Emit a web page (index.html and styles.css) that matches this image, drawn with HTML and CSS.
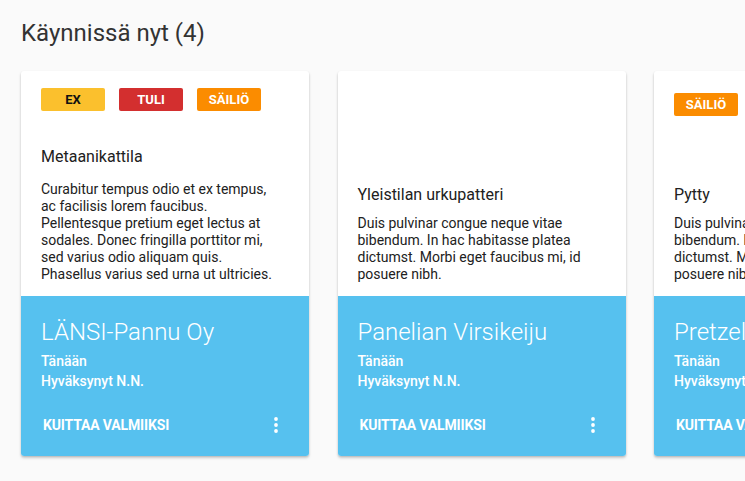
FILE: index.html
```html
<!DOCTYPE HTML>
<html>

<head>
    <meta charset="utf-8">
    <link rel="stylesheet" href="styles.css">
</head>

<body>
    <div class="page">
        <h1 class="page-title">Käynnissä nyt (4)</h1>

        <div class="cards">
            <div class="card">
                <div class="card-body card-body--tight">
                    <div class="tags">
                        <span class="tag tag-ex">EX</span>
                        <span class="tag tag-fire">TULI</span>
                        <span class="tag tag-tank">SÄILIÖ</span>
                    </div>
                    <h2 class="card-title card-title--spaced">Metaanikattila</h2>
                    <p class="card-text">Curabitur tempus odio et ex tempus, ac facilisis lorem faucibus.
                        Pellentesque pretium eget lectus at sodales. Donec fringilla porttitor mi,
                        sed varius odio aliquam quis. Phasellus varius sed urna ut ultricies.</p>
                </div>
                <div class="card-footer">
                    <div class="company">LÄNSI-Pannu Oy</div>
                    <div class="meta">Tänään<br>Hyväksynyt N.N.</div>
                    <div class="actions">
                        <button class="action-btn">Kuittaa valmiiksi</button>
                        <button class="more-btn" aria-label="Lisää">
                            <svg width="24" height="24" viewBox="0 0 24 24">
                                <circle cx="12" cy="6" r="1.9" fill="#fff" />
                                <circle cx="12" cy="12" r="1.9" fill="#fff" />
                                <circle cx="12" cy="18" r="1.9" fill="#fff" />
                            </svg>
                        </button>
                    </div>
                </div>
            </div>

            <div class="card">
                <div class="card-body">
                    <h2 class="card-title">Yleistilan urkupatteri</h2>
                    <p class="card-text">Duis pulvinar congue neque vitae bibendum. In hac habitasse platea
                        dictumst. Morbi eget faucibus mi, id posuere nibh.</p>
                </div>
                <div class="card-footer">
                    <div class="company">Panelian Virsikeiju</div>
                    <div class="meta">Tänään<br>Hyväksynyt N.N.</div>
                    <div class="actions">
                        <button class="action-btn">Kuittaa valmiiksi</button>
                        <button class="more-btn" aria-label="Lisää">
                            <svg width="24" height="24" viewBox="0 0 24 24">
                                <circle cx="12" cy="6" r="1.9" fill="#fff" />
                                <circle cx="12" cy="12" r="1.9" fill="#fff" />
                                <circle cx="12" cy="18" r="1.9" fill="#fff" />
                            </svg>
                        </button>
                    </div>
                </div>
            </div>

            <div class="card">
                <div class="card-body">
                    <div class="tags">
                        <span class="tag tag-tank">SÄILIÖ</span>
                    </div>
                    <h2 class="card-title">Pytty</h2>
                    <p class="card-text">Duis pulvinar congue neque vitae bibendum. In hac habitasse platea
                        dictumst. Morbi eget faucibus mi, id posuere nibh.</p>
                </div>
                <div class="card-footer">
                    <div class="company">Pretzelipaja Oy</div>
                    <div class="meta">Tänään<br>Hyväksynyt N.N.</div>
                    <div class="actions">
                        <button class="action-btn">Kuittaa valmiiksi</button>
                        <button class="more-btn" aria-label="Lisää">
                            <svg width="24" height="24" viewBox="0 0 24 24">
                                <circle cx="12" cy="6" r="1.9" fill="#fff" />
                                <circle cx="12" cy="12" r="1.9" fill="#fff" />
                                <circle cx="12" cy="18" r="1.9" fill="#fff" />
                            </svg>
                        </button>
                    </div>
                </div>
            </div>
        </div>
    </div>
</body>

</html>
```

FILE: styles.css
```css
html,
body {
    margin: 0;
    background-color: #fafafa;
    font-family: Roboto, "Noto Sans", sans-serif;
}

.page {
    padding: 17px 0 0 21px;
    height: 481px;
    box-sizing: border-box;
    overflow: hidden;
}

.page-title {
    margin: 0;
    font-size: 24px;
    line-height: 32px;
    font-weight: 400;
    color: #333;
}

.cards {
    display: flex;
    gap: 28.5px;
    margin-top: 22px;
}

.card {
    flex: 0 0 288px;
    height: 385px;
    display: flex;
    flex-direction: column;
    background-color: #fff;
    border-radius: 3px;
    overflow: hidden;
    box-shadow: 0 2px 3px rgba(0, 0, 0, 0.18), 0 1px 2px rgba(0, 0, 0, 0.1);
}

/* white upper part */

.card-body {
    height: 225px;
    box-sizing: border-box;
    padding: 22px 28px 13px 20px;
    display: flex;
    flex-direction: column;
}

.card-body--tight {
    padding-top: 17px;
}

.tags {
    display: flex;
    gap: 14px;
}

.tag {
    flex: 0 0 64px;
    height: 23px;
    line-height: 23px;
    text-align: center;
    border-radius: 2px;
    font-size: 13px;
    font-weight: 700;
    color: #fff;
}

.tag-ex {
    background-color: #fbc02d;
    color: #111;
}

.tag-fire {
    background-color: #d32f2f;
}

.tag-tank {
    background-color: #fb8c00;
}

.card-title {
    margin: auto 0 10px;
    font-size: 16px;
    line-height: 20px;
    font-weight: 400;
    color: #212121;
}

.card-title--spaced {
    margin-bottom: 14px;
}

.card-text {
    margin: 0;
    font-size: 14px;
    line-height: 17px;
    color: #212121;
}

/* blue lower part */

.card-footer {
    flex: 1;
    display: flex;
    flex-direction: column;
    padding: 20px 20px 0;
    background-color: #56c1ef;
    color: #fff;
}

.company {
    font-size: 24px;
    line-height: 32px;
    font-weight: 300;
    white-space: nowrap;
}

.meta {
    margin-top: 3px;
    font-size: 14px;
    line-height: 20px;
    font-weight: 500;
    white-space: nowrap;
}

.actions {
    display: flex;
    align-items: center;
    justify-content: space-between;
    height: 36px;
    margin: 16px 1px 0 -6px;
}

.action-btn {
    border: 0;
    background: none;
    padding: 0 8px;
    height: 36px;
    font-family: inherit;
    font-size: 14px;
    font-weight: 700;
    letter-spacing: -0.15px;
    text-transform: uppercase;
    color: #fff;
    white-space: nowrap;
}

.more-btn {
    border: 0;
    background: none;
    padding: 0;
    width: 24px;
    height: 24px;
    display: flex;
}
```
